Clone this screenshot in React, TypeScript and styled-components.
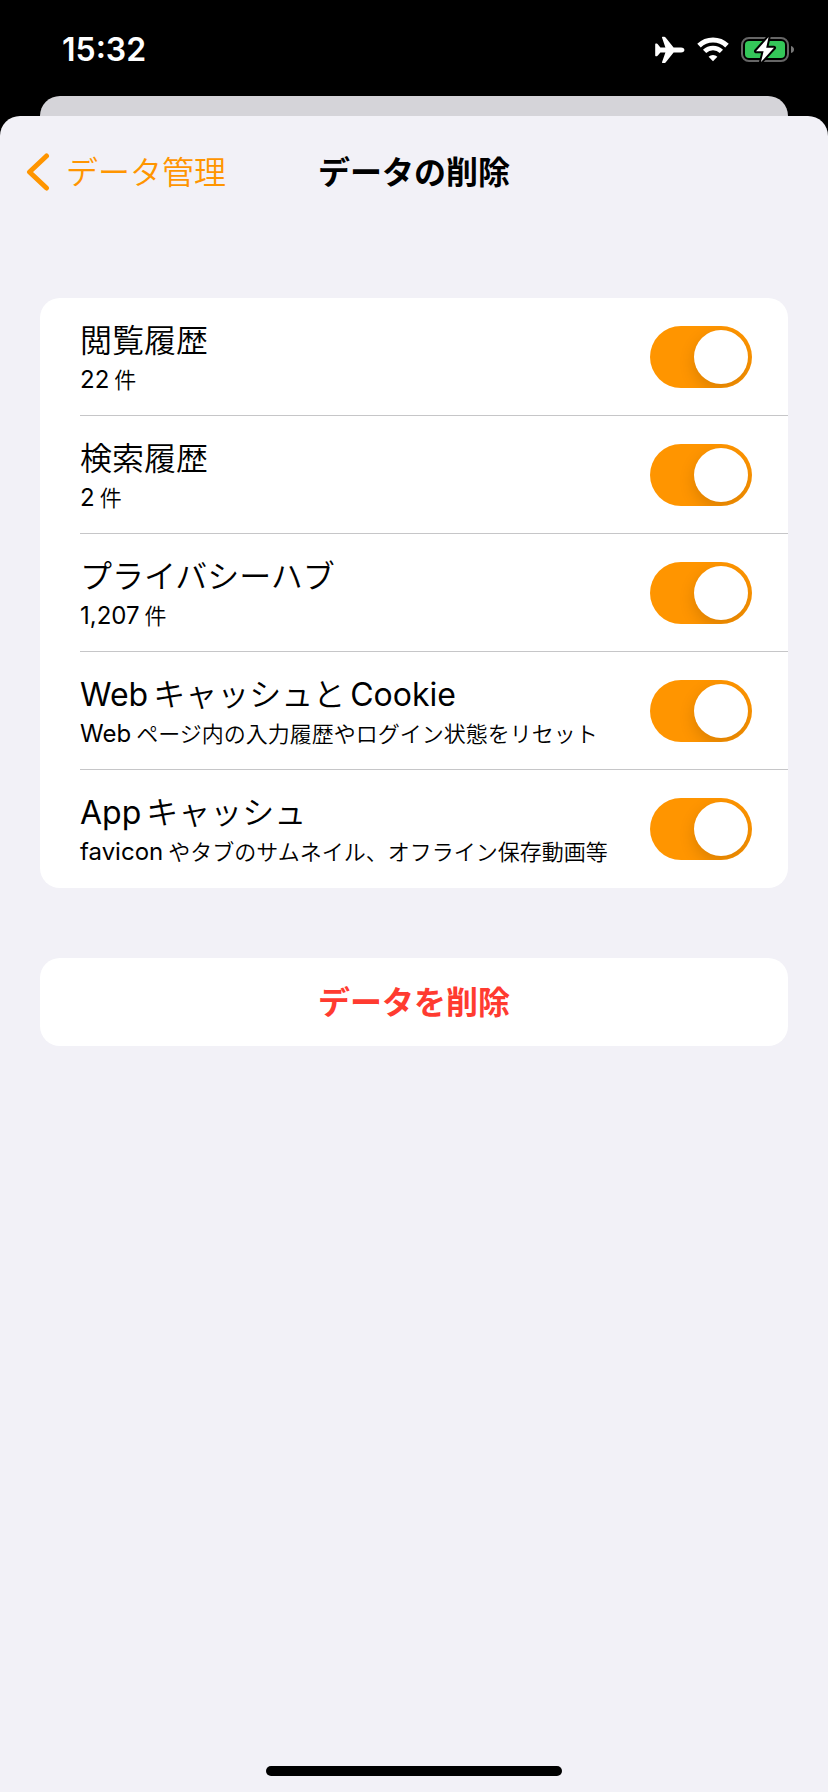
import React, { useId, useState } from "react";
import styled, { createGlobalStyle } from "styled-components";

const accent = "#ff9500";

const GlobalStyle = createGlobalStyle`
  *, *::before, *::after { box-sizing: border-box; }
  body {
    margin: 0;
    background: #000;
    color: #000;
    font-family: Inter, "Noto Sans CJK JP", sans-serif;
    text-autospace: no-autospace;
  }
`;

const Screen = styled.div`
  display: flex;
  flex-direction: column;
  min-height: 100vh;
`;

const StatusBar = styled.header`
  display: flex;
  align-items: center;
  justify-content: space-between;
  height: 96px;
  padding: 4px 33px 0 62px;
  color: #fff;
`;

const Clock = styled.time`
  font-size: 32px;
  line-height: 40px;
  font-weight: 600;
`;

const StatusIcons = styled.div`
  display: flex;
  align-items: center;
  gap: 11px;
`;

const BackSheet = styled.div`
  height: 20px;
  margin: 0 40px;
  border-radius: 20px 20px 0 0;
  background: #d5d4d9;
`;

const Sheet = styled.main`
  display: flex;
  flex: 1;
  flex-direction: column;
  border-radius: 20px 20px 0 0;
  background: #f2f1f7;
`;

const NavBar = styled.nav`
  display: grid;
  grid-template-columns: 1fr auto 1fr;
  align-items: center;
  height: 112px;
  padding: 0 24px;
`;

const BackButton = styled.button`
  display: flex;
  align-items: center;
  justify-self: start;
  gap: 14px;
  padding: 2px 0 0;
  border: 0;
  background: none;
  color: ${accent};
  font: inherit;
  font-size: 32px;
  font-weight: 350;
  line-height: 40px;
`;

const NavTitle = styled.h1`
  margin: 0;
  padding-top: 2px;
  font-size: 32px;
  font-weight: 700;
  line-height: 40px;
`;

const Content = styled.div`
  display: flex;
  flex: 1;
  flex-direction: column;
  gap: 70px;
  padding: 70px 40px;
`;

const Card = styled.ul`
  margin: 0;
  padding: 0 0 0 40px;
  border-radius: 20px;
  background: #fff;
  list-style: none;
`;

const Row = styled.li`
  display: flex;
  align-items: center;
  justify-content: space-between;
  height: 118px;
  padding-right: 36px;
  border-bottom: 1px solid #c6c6c8;

  &:last-child { border-bottom-color: transparent; }
`;

const RowLabel = styled.label`
  display: flex;
  flex-direction: column;
  padding-top: 4px;
  font-weight: 350;
  white-space: nowrap;
`;

const RowTitle = styled.span`
  font-size: 32px;
  line-height: 42px;
`;

const RowDetail = styled.span`
  font-size: 22px;
  line-height: 36px;
`;

const Latin = styled.span<{ $before: boolean; $after: boolean }>`
  margin-left: ${(p) => (p.$before ? "5px" : "0")};
  margin-right: ${(p) => (p.$after ? "5px" : "0")};
  font-weight: 400;

  ${RowDetail} & { font-size: 24px; }
`;

const Switch = styled.input`
  flex: none;
  width: 102px;
  height: 62px;
  margin: 0;
  padding: 4px;
  overflow: hidden;
  border-radius: 31px;
  appearance: none;
  background: #e9e9ea;

  &::before {
    display: block;
    width: 54px;
    height: 54px;
    border-radius: 50%;
    background: #fff;
    box-shadow: 0 6px 16px rgba(0, 0, 0, 0.15);
    content: "";
  }

  &:checked { background: ${accent}; }
  &:checked::before { margin-left: 40px; }
`;

const DeleteButton = styled.button`
  height: 88px;
  padding: 2px 0 0;
  border: 0;
  border-radius: 20px;
  background: #fff;
  color: #ff3b30;
  font: inherit;
  font-size: 32px;
  font-weight: 700;
  line-height: 40px;
`;

const HomeIndicator = styled.div`
  align-self: center;
  width: 296px;
  height: 10px;
  margin-bottom: 16px;
  border-radius: 5px;
  background: #000;
`;

const PlaneIcon = () => (
  <svg width="30" height="28" viewBox="0 0 30 28" fill="#fff" aria-hidden="true">
    <path d="M26 11.4H18.6L10.6 1.4Q10 .8 9.2 .8H7.6Q6.8 .8 7 1.6L10.4 11.4H5.4L2.6 8Q2.3 7.6 1.8 7.6H.8Q.2 7.6 .2 8.2V19.6Q.2 20.2 .8 20.2H1.8Q2.3 20.2 2.6 19.8L5.4 16.4H10.4L7 26.2Q6.8 27 7.6 27H9.2Q10 27 10.6 26.4L18.6 16.4H26Q29.4 16 29.4 13.9T26 11.4Z" />
  </svg>
);

const WifiIcon = () => (
  <svg width="34" height="26" viewBox="0 0 34 26" aria-hidden="true">
    <path d="M3 8.6A20 20 0 0 1 31 8.6" fill="none" stroke="#fff" strokeWidth="5" />
    <path d="M8.6 14.4A12 12 0 0 1 25.4 14.4" fill="none" stroke="#fff" strokeWidth="4.6" />
    <path d="M17 24.2L12.6 19.8A6.4 6.4 0 0 1 21.4 19.8Z" fill="#fff" />
  </svg>
);

const BatteryIcon = () => (
  <svg width="54" height="28" viewBox="0 0 54 28" aria-hidden="true">
    <rect x="1" y="2" width="46" height="23" rx="7" fill="none" stroke="#666" strokeWidth="2" />
    <rect x="4" y="5" width="40" height="17" rx="4" fill="#34c759" />
    <path d="M50 10Q53 11 53 13.5T50 17Z" fill="#777" />
    <path
      d="M27.6 1L15 15.2H22.6L20 26L33 11.8H25.2Z"
      fill="#fff"
      stroke="#000"
      strokeWidth="4"
      strokeLinejoin="round"
      paintOrder="stroke"
    />
  </svg>
);

const Chevron = () => (
  <svg width="28" height="40" viewBox="0 0 28 40" aria-hidden="true">
    <path
      d="M22.5 3L5.5 19L22.5 35"
      fill="none"
      stroke={accent}
      strokeWidth="5"
      strokeLinecap="round"
      strokeLinejoin="round"
    />
  </svg>
);

/** Sets the Latin runs of a Japanese string in their own size, with a thin gap on the Japanese side. */
function MixedText({ text }: { text: string }) {
  const runs = text.split(/([\x21-\x7e]+)/).filter(Boolean);
  return (
    <>
      {runs.map((run, i) =>
        /^[\x21-\x7e]/.test(run) ? (
          <Latin key={i} $before={i > 0} $after={i < runs.length - 1}>
            {run}
          </Latin>
        ) : (
          run
        )
      )}
    </>
  );
}

function SettingRow({ title, detail }: { title: string; detail: string }) {
  const id = useId();
  const [on, setOn] = useState(true);
  return (
    <Row>
      <RowLabel htmlFor={id}>
        <RowTitle>
          <MixedText text={title} />
        </RowTitle>
        <RowDetail>
          <MixedText text={detail} />
        </RowDetail>
      </RowLabel>
      <Switch id={id} type="checkbox" role="switch" checked={on} onChange={() => setOn(!on)} />
    </Row>
  );
}

const settings = [
  { title: "閲覧履歴", detail: "22件" },
  { title: "検索履歴", detail: "2件" },
  { title: "プライバシーハブ", detail: "1,207件" },
  { title: "WebキャッシュとCookie", detail: "Webページ内の入力履歴やログイン状態をリセット" },
  { title: "Appキャッシュ", detail: "faviconやタブのサムネイル、オフライン保存動画等" },
];

export default function App() {
  return (
    <Screen lang="ja">
      <GlobalStyle />
      <StatusBar>
        <Clock>15:32</Clock>
        <StatusIcons>
          <PlaneIcon />
          <WifiIcon />
          <BatteryIcon />
        </StatusIcons>
      </StatusBar>
      <BackSheet />
      <Sheet>
        <NavBar>
          <BackButton type="button">
            <Chevron />
            データ管理
          </BackButton>
          <NavTitle>データの削除</NavTitle>
        </NavBar>
        <Content>
          <Card>
            {settings.map((s) => (
              <SettingRow key={s.title} {...s} />
            ))}
          </Card>
          <DeleteButton type="button">データを削除</DeleteButton>
        </Content>
        <HomeIndicator />
      </Sheet>
    </Screen>
  );
}
